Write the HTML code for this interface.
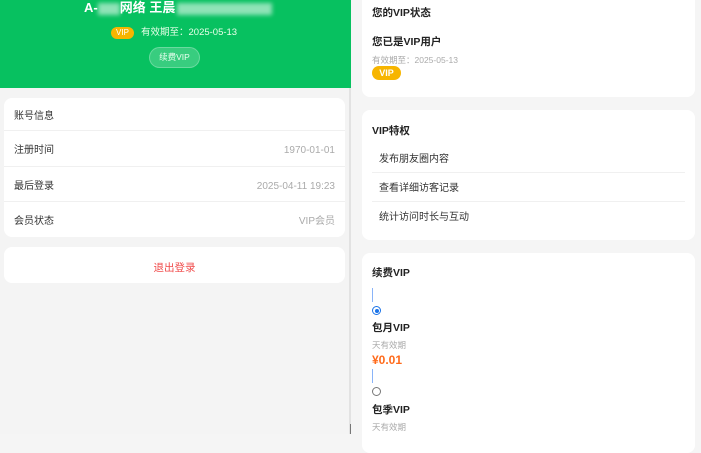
<!DOCTYPE html>
<html><head><meta charset="utf-8"><style>
*{margin:0;padding:0;box-sizing:border-box}
body{width:701px;height:434px;overflow:hidden;font-family:"Liberation Sans","Noto Sans CJK SC",sans-serif;background:#f5f5f5;position:relative}
.abs{position:absolute}
#left{left:0;top:0;width:350px;height:434px;background:#f4f4f4}
#hdr{left:0;top:0;width:350px;height:88px;background:#07c160;color:#fff}
.card{position:absolute;background:#fff;border-radius:8px}
.sep{position:absolute;height:1px;background:#f0f0f0}
.t{position:absolute;font-size:10px;color:#333;line-height:14px;white-space:nowrap;margin-top:2px}
.lc .t{margin-top:3px}
.b{font-weight:bold;font-size:10.5px;color:#222}
.blur{display:inline-block;height:12px;background:rgba(255,255,255,.55);filter:blur(2px);vertical-align:middle}
</style></head><body>
<div id="left" class="abs">
 <div id="hdr" class="abs">
  <div class="abs" style="left:84px;top:0px;font-size:13px;font-weight:bold;line-height:16px">A-<span class="blur" style="width:22px"></span>网络 王晨<span class="blur" style="width:95px;margin-left:2px"></span></div>
  <div class="abs" style="left:111px;top:27px;width:23px;height:12px;background:#f7b500;border-radius:6px;font-size:8px;text-align:center;line-height:12px;color:#fff">VIP</div>
  <div class="abs" style="left:141px;top:26px;font-size:9.5px;line-height:14px;color:#e8ffe8">有效期至：2025-05-13</div>
  <div class="abs" style="left:149px;top:47px;width:51px;height:21px;border-radius:11px;background:rgba(255,255,255,.2);border:1px solid rgba(255,255,255,.25);font-size:8.5px;text-align:center;line-height:19px;color:#eafff0">续费VIP</div>
 </div>
 <div class="card lc" style="left:4px;top:98px;width:341px;height:139px">
  <div class="t" style="left:10px;top:9px">账号信息</div>
  <div class="sep" style="left:0;right:0;top:32px"></div>
  <div class="t" style="left:10px;top:43px">注册时间</div><div class="t" style="right:10px;top:43px;color:#aaa">1970-01-01</div>
  <div class="sep" style="left:0;right:0;top:68px"></div>
  <div class="t" style="left:10px;top:79px">最后登录</div><div class="t" style="right:10px;top:79px;color:#aaa">2025-04-11 19:23</div>
  <div class="sep" style="left:0;right:0;top:103px"></div>
  <div class="t" style="left:10px;top:114px">会员状态</div><div class="t" style="right:10px;top:114px;color:#aaa">VIP会员</div>
 </div>
 <div class="card lc" style="left:4px;top:247px;width:341px;height:36px">
  <div class="t" style="left:0;right:0;top:11px;text-align:center;color:#f04a4a;font-size:10.5px">退出登录</div>
 </div>
</div>
<div class="abs" style="left:349px;top:0;width:2px;height:434px;background:#e2e2e2"></div>
<div class="abs" style="left:349px;top:0;width:2px;height:88px;background:#07c160"></div>
<div class="abs" style="left:350px;top:424px;width:1px;height:10px;background:#777"></div>
<div class="card" style="left:362px;top:-10px;width:333px;height:107px">
 <div class="t b" style="left:10px;top:14px">您的VIP状态</div>
 <div class="t b" style="left:10px;top:43px">您已是VIP用户</div>
 <div class="t" style="left:10px;top:61px;font-size:8.5px;color:#aaa">有效期至：2025-05-13</div>
 <div class="abs" style="left:10px;top:76px;width:29px;height:14px;border-radius:7px;background:#f7b500;color:#fff;font-size:9px;font-weight:bold;text-align:center;line-height:14px">VIP</div>
</div>
<div class="card" style="left:362px;top:110px;width:333px;height:130px">
 <div class="t b" style="left:10px;top:12px">VIP特权</div>
 <div class="t" style="left:17px;top:41px">发布朋友圈内容</div>
 <div class="sep" style="left:10px;right:10px;top:62px"></div>
 <div class="t" style="left:17px;top:70px">查看详细访客记录</div>
 <div class="sep" style="left:10px;right:10px;top:91px"></div>
 <div class="t" style="left:17px;top:99px">统计访问时长与互动</div>
</div>
<div class="card" style="left:362px;top:253px;width:333px;height:200px">
 <div class="t b" style="left:10px;top:11px">续费VIP</div>
 <div class="abs" style="left:10px;top:35px;width:1px;height:14px;background:#8ab4f8"></div>
 <div class="abs" style="left:10px;top:53px;width:9px;height:9px;border-radius:50%;border:1px solid #1a73e8;background:#fff"><div class="abs" style="left:1.5px;top:1.5px;width:4px;height:4px;border-radius:50%;background:#1a73e8"></div></div>
 <div class="t b" style="left:10px;top:66px">包月VIP</div>
 <div class="t" style="left:10px;top:83px;font-size:8.5px;color:#aaa">天有效期</div>
 <div class="t" style="left:10px;top:98px;font-size:12px;font-weight:bold;color:#ff6a1a">¥0.01</div>
 <div class="abs" style="left:10px;top:116px;width:1px;height:14px;background:#8ab4f8"></div>
 <div class="abs" style="left:10px;top:134px;width:9px;height:9px;border-radius:50%;border:1px solid #777;background:#fff"></div>
 <div class="t b" style="left:10px;top:148px">包季VIP</div>
 <div class="t" style="left:10px;top:165px;font-size:8.5px;color:#aaa">天有效期</div>
</div>
</body></html>
